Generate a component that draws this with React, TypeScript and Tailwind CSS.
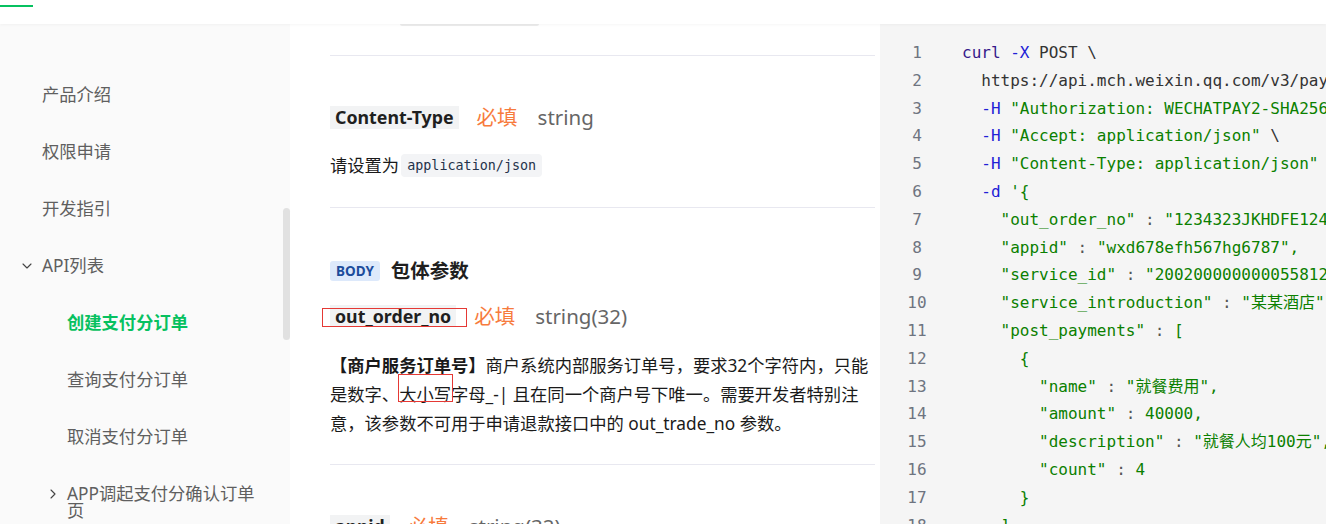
import React from "react";
import { ChevronDown, ChevronRight } from "lucide-react";

const sans = "font-['Noto_Sans','Noto_Sans_CJK_SC',sans-serif]";
const mono = "font-['DejaVu_Sans_Mono','Noto_Sans_CJK_SC',monospace]";

type Tok = [string, string];

// 代码颜色
const C = {
  cmd: "text-[#35198a]",
  flag: "text-[#2121d6]",
  plain: "text-[#333333]",
  str: "text-[#0b8000]",
  punc: "text-[#555555]",
};

const codeLines: Tok[][] = [
  [["curl", C.cmd], [" ", C.plain], ["-X", C.flag], [" POST \\", C.plain]],
  [["  https://api.mch.weixin.qq.com/v3/payscore/serviceorder \\", C.plain]],
  [["  ", C.plain], ["-H", C.flag], [' "Authorization: WECHATPAY2-SHA256-RSA2048 mchid=\\"1900000001\\""', C.str]],
  [["  ", C.plain], ["-H", C.flag], [' "Accept: application/json"', C.str], [" \\", C.plain]],
  [["  ", C.plain], ["-H", C.flag], [' "Content-Type: application/json"', C.str], [" \\", C.plain]],
  [["  ", C.plain], ["-d", C.flag], [" '{", C.str]],
  [['    "out_order_no"', C.str], [" : ", C.punc], ['"1234323JKHDFE1243252",', C.str]],
  [['    "appid"', C.str], [" : ", C.punc], ['"wxd678efh567hg6787",', C.str]],
  [['    "service_id"', C.str], [" : ", C.punc], ['"2002000000000558128851361561536",', C.str]],
  [['    "service_introduction"', C.str], [" : ", C.punc], ['"某某酒店",', C.str]],
  [['    "post_payments"', C.str], [" : ", C.punc], ["[", C.str]],
  [["      {", C.str]],
  [['        "name"', C.str], [" : ", C.punc], ['"就餐费用",', C.str]],
  [['        "amount"', C.str], [" : ", C.punc], ["40000,", C.str]],
  [['        "description"', C.str], [" : ", C.punc], ['"就餐人均100元",', C.str]],
  [['        "count"', C.str], [" : ", C.punc], ["4", C.str]],
  [["      }", C.str]],
  [["    ],", C.str]],
];

function SideItem({
  label,
  level,
  active,
  arrow,
}: {
  label: string;
  level: 1 | 2;
  active?: boolean;
  arrow?: "down" | "right";
}) {
  return (
    <div
      className={`flex items-start py-[20px] leading-[17px] text-[17.3px] ${
        active ? "text-[#07c160] font-bold" : "text-[#5f5f5f]"
      } ${level === 1 ? (arrow ? "pl-[19px]" : "pl-[42px]") : arrow ? "pl-[45px]" : "pl-[67px]"}`}
    >
      {arrow && (
        <span className={`flex h-[17px] items-center ${level === 1 ? "w-[23px]" : "w-[22px]"}`}>
          {arrow === "down" ? (
            <ChevronDown size={16} strokeWidth={1.7} className="text-[#444]" />
          ) : (
            <ChevronRight size={16} strokeWidth={1.7} className="text-[#444]" />
          )}
        </span>
      )}
      <span className={arrow === "right" ? "w-[192px]" : ""}>{label}</span>
    </div>
  );
}

function ParamRow({ name, type, chipH = "h-[22px]" }: { name: string; type: string; chipH?: string }) {
  return (
    <div className="flex items-center">
      <span className={`flex ${chipH} items-center bg-[#f2f3f4] px-[5px] text-[17.8px] font-bold text-[#1f1f1f]`}>
        {name}
      </span>
      <span className="ml-[18px] text-[20.5px] leading-none text-[#f77b3d]">必填</span>
      <span className="ml-[20px] text-[20.5px] leading-none text-[#666666]">{type}</span>
    </div>
  );
}

export default function App() {
  return (
    <div className={`flex h-[524px] w-full flex-col overflow-hidden bg-white ${sans}`}>
      {/* 顶栏 */}
      <div className="relative z-10 h-[24px] shrink-0 bg-white shadow-[0_1px_3px_rgba(0,0,0,0.04)]">
        <div className="mt-[5px] h-[2px] w-[33px] bg-[#07c160]" />
      </div>

      <div className="flex min-h-0 flex-1">
        {/* 侧边栏 */}
        <div className="relative w-[290px] shrink-0 bg-[#fafafa] pt-[42px]">
          <SideItem level={1} label="产品介绍" />
          <SideItem level={1} label="权限申请" />
          <SideItem level={1} label="开发指引" />
          <SideItem level={1} label="API列表" arrow="down" />
          <SideItem level={2} label="创建支付分订单" active />
          <SideItem level={2} label="查询支付分订单" />
          <SideItem level={2} label="取消支付分订单" />
          <SideItem level={2} label="APP调起支付分确认订单页" arrow="right" />
          <div className="absolute left-[283px] top-[184px] h-[132px] w-[7px] rounded-full bg-[#e1e1e1]" />
        </div>

        {/* 文档正文 */}
        <div className="w-[590px] shrink-0 bg-white pl-[40px] pr-[5px]">
          <div className="ml-[70px] h-[2px] w-[139px] rounded-b-[3px] bg-[#ececec]" />
          <div className="mt-[29px] h-px bg-[#e8e8f0]" />

          <div className="mt-[50px]">
            <ParamRow name="Content-Type" type="string" chipH="h-[23px]" />
          </div>
          <div className="mt-[22px] flex items-center text-[17.3px] leading-[29px] text-[#1a1a1a]">
            请设置为
            <code className={`ml-[2px] flex h-[23px] items-center rounded-[4px] bg-[#f3f4f6] px-[6px] text-[13.4px] text-[#24324a] ${mono}`}>
              application/json
            </code>
          </div>
          <div className="mt-[27px] h-px bg-[#e8e8f0]" />

          <div className="mt-[48px] flex items-center">
            <span className="flex h-[20px] items-center rounded-[3px] bg-[#dde9fb] px-[6px] text-[13.5px] font-bold text-[#1c4c9c]">
              BODY
            </span>
            <span className="ml-[11px] text-[19.5px] font-bold text-[#1f1f1f]">包体参数</span>
          </div>

          <div className="relative mt-[20px]">
            <ParamRow name="out_order_no" type="string(32)" />
            <div className="absolute left-[-8px] top-[3px] h-[19px] w-[145px] border border-[#e53935]" />
          </div>

          <p className="relative mt-[24px] text-[17.3px] leading-[29px] whitespace-nowrap text-[#1a1a1a]">
            <b>【商户服务订单号】</b>商户系统内部服务订单号，要求32个字符内，只能
            <br />
            是数字、大小写字母_-| 且在同一个商户号下唯一。需要开发者特别注
            <br />
            意，该参数不可用于申请退款接口中的 out_trade_no 参数。
            <span className="absolute left-[68px] top-[23px] h-[28px] w-[55px] border border-[#e53935]" />
          </p>
          <div className="mt-[26px] h-px bg-[#e8e8f0]" />

          <div className="mt-[50px]">
            <ParamRow name="appid" type="string(32)" />
          </div>
        </div>

        {/* 代码示例 */}
        <div className={`min-w-0 flex-1 overflow-hidden bg-[#f5f5f5] pt-[15px] text-[16px] leading-[27.8px] ${mono}`}>
          {codeLines.map((line, i) => (
            <div key={i} className="flex whitespace-pre">
              <span className="w-[74px] shrink-0 text-center text-[#6e7480]">{i + 1}</span>
              <span className="pl-[8px]">
                {line.map(([t, c], j) => (
                  <span key={j} className={c}>
                    {t}
                  </span>
                ))}
              </span>
            </div>
          ))}
        </div>
      </div>
    </div>
  );
}
